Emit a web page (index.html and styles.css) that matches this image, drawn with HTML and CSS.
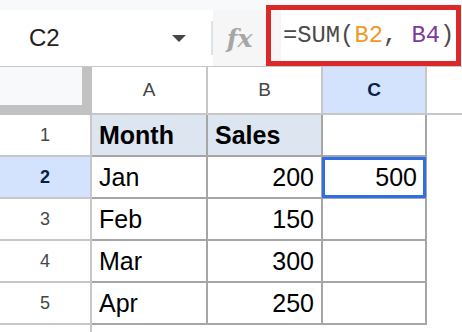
FILE: index.html
```html
<!DOCTYPE html>
<html lang="en">
<head>
    <meta charset="UTF-8">
    <meta name="viewport" content="width=device-width, initial-scale=1.0">
    <title>Planilha</title>
    <link rel="stylesheet" href="styles.css">
</head>
<body>
    <div class="formula-bar">
        <div class="name-box">
            <span class="cell-ref">C2</span>
            <span class="caret"></span>
            <span class="divider"></span>
        </div>
        <div class="fx">fx</div>
        <div class="formula">
            <span class="strip"></span>
            <span class="formula-text">=SUM(<span class="ref-orange">B2</span>, <span class="ref-purple">B4</span>)</span>
        </div>
    </div>

    <div class="sheet">
        <div class="corner"></div>
        <div class="col-head">A</div>
        <div class="col-head">B</div>
        <div class="col-head selected">C</div>
        <div class="col-head rest"></div>

        <div class="row-head">1</div>
        <div class="cell title">Month</div>
        <div class="cell title">Sales</div>
        <div class="cell"></div>
        <div class="fill"></div>

        <div class="row-head selected">2</div>
        <div class="cell">Jan</div>
        <div class="cell num">200</div>
        <div class="cell num active">500</div>
        <div class="fill"></div>

        <div class="row-head">3</div>
        <div class="cell">Feb</div>
        <div class="cell num">150</div>
        <div class="cell"></div>
        <div class="fill"></div>

        <div class="row-head">4</div>
        <div class="cell">Mar</div>
        <div class="cell num">300</div>
        <div class="cell"></div>
        <div class="fill"></div>

        <div class="row-head">5</div>
        <div class="cell">Apr</div>
        <div class="cell num">250</div>
        <div class="cell"></div>
        <div class="fill"></div>

        <div class="row-head last"></div>
        <div class="fill"></div>
        <div class="fill"></div>
        <div class="fill"></div>
        <div class="fill"></div>
    </div>
</body>
</html>
```

FILE: styles.css
```css
body {
    margin: 0;
    font-family: "Liberation Sans", Arial, sans-serif;
    background-color: #ffffff;
    height: 332px;
    overflow: hidden;
}
.formula-bar {
    display: flex;
    align-items: flex-start;
    height: 66px;
    background-color: #f8f9fb;
    border-bottom: 1px solid #c7c7c7;
}
.name-box {
    display: flex;
    align-items: center;
    width: 213px;
    height: 56px;
    margin-top: 10px;
    background: white;
}
.cell-ref {
    padding-left: 29px;
    font-size: 24px;
    color: #1f1f1f;
}
.caret {
    margin-left: auto;
    margin-right: 25px;
    border-left: 7px solid transparent;
    border-right: 7px solid transparent;
    border-top: 7px solid #444746;
}
.divider {
    width: 2px;
    height: 34px;
    background-color: #dde3ea;
}
.fx {
    width: 53px;
    height: 56px;
    margin-top: 10px;
    display: flex;
    align-items: center;
    justify-content: center;
    background-color: #f6f6f6;
    font-family: "DejaVu Serif", serif;
    font-style: italic;
    font-weight: bold;
    font-size: 25px;
    color: #a6a6a6;
}
.formula {
    display: flex;
    align-items: center;
    width: 195px;
    height: 61px;
    margin-top: 5px;
    box-sizing: border-box;
    border: 5px solid #db2828;
    background: white;
}
.strip {
    width: 10px;
    height: 100%;
    background-color: #f6f6f6;
}
.formula-text {
    padding-left: 2px;
    font-family: "Liberation Mono", monospace;
    font-size: 23.8px;
    color: #4a4a4a;
    white-space: pre;
}
.ref-orange {
    color: #f09a26;
}
.ref-purple {
    color: #7e3a99;
}
.sheet {
    display: grid;
    grid-template-columns: 92px 116px 115px 104px 1fr;
    grid-template-rows: 48px repeat(5, 42px) 7px;
}
.sheet > div {
    box-sizing: border-box;
}
.corner {
    background-color: #f8f9fa;
    border-right: 10px solid #c2c2c2;
    border-bottom: 10px solid #c2c2c2;
}
.col-head {
    display: flex;
    align-items: center;
    justify-content: center;
    border-right: 2px solid #c7c7c7;
    border-bottom: 2px solid #c7c7c7;
    font-size: 19px;
    color: #444746;
}
.col-head.selected {
    background-color: #d3e3fd;
    color: #0b1f44;
    font-weight: bold;
}
.col-head.rest {
    border-right: none;
}
.row-head {
    display: flex;
    align-items: center;
    justify-content: center;
    border-right: 2px solid #c7c7c7;
    border-bottom: 2px solid #c7c7c7;
    font-size: 18px;
    color: #444746;
}
.row-head.selected {
    background-color: #d3e3fd;
    color: #0b1f44;
    font-weight: bold;
}
.row-head.last {
    border-bottom: none;
}
.cell {
    display: flex;
    align-items: center;
    padding: 0 7px;
    border-right: 2px solid #a6a6a6;
    border-bottom: 2px solid #a6a6a6;
    font-size: 25px;
    color: #000;
}
.cell.title {
    background-color: #dce5f0;
    font-weight: bold;
}
.cell.num {
    justify-content: flex-end;
}
.cell.active {
    position: relative;
    padding-right: 8px;
}
.cell.active::after {
    content: "";
    position: absolute;
    top: 0;
    left: -1px;
    right: -1px;
    bottom: -1px;
    border: 3px solid #2f6fe3;
}
```
